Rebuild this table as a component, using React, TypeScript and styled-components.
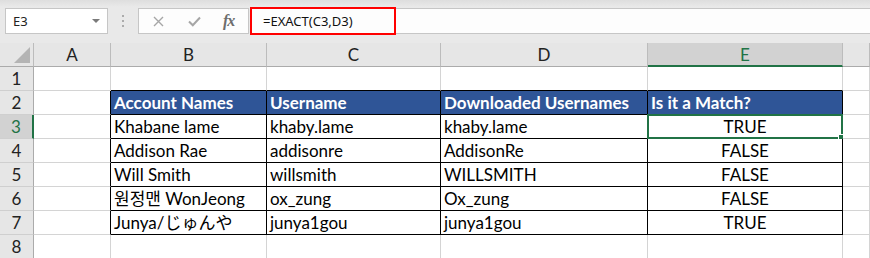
import React from 'react';
import styled, { createGlobalStyle } from 'styled-components';

const GlobalStyle = createGlobalStyle`
  html, body {
    margin: 0;
    padding: 0;
    background: #fff;
  }
  body {
    width: 870px;
    height: 258px;
    overflow: hidden;
    font-family: Lato, "Liberation Sans", sans-serif;
  }
`;

const GREEN = '#217346';
const GRID = '#d4d4d4';
const INK = '#000';

const Window = styled.div`
  width: 870px;
  height: 258px;
  overflow: hidden;
  display: flex;
  flex-direction: column;
  background: #fff;
`;

/* ---------- formula bar ---------- */

const FormulaBar = styled.div`
  flex: none;
  height: 43px;
  box-sizing: border-box;
  padding: 8px 0 0 5px;
  display: flex;
  align-items: flex-start;
  background: linear-gradient(#dedede, #e9e9e9 7px, #e9e9e9);
`;

const NameBox = styled.div`
  width: 103px;
  height: 26px;
  box-sizing: border-box;
  border: 1px solid #c6c6c6;
  background: #fff;
  display: flex;
  align-items: center;
  justify-content: space-between;
  padding: 0 7px 0 7px;
  font: 13px "Noto Sans", "Open Sans", sans-serif;
  color: #222;
`;

const Caret = styled.span`
  width: 0;
  height: 0;
  border-left: 4px solid transparent;
  border-right: 4px solid transparent;
  border-top: 4px solid #7a7a7a;
`;

const Grip = styled.div`
  width: 30px;
  height: 26px;
  display: flex;
  flex-direction: column;
  align-items: center;
  justify-content: center;
  gap: 3px;
  span {
    width: 2px;
    height: 2px;
    background: #ababab;
  }
`;

const FxBox = styled.div`
  width: 111px;
  height: 26px;
  box-sizing: border-box;
  border: 1px solid #c6c6c6;
  background: #fdfdfd;
  display: flex;
  align-items: center;
  padding-left: 14px;
  gap: 24px;
`;

const FxLabel = styled.span`
  font: italic 700 16px "Liberation Serif", serif;
  color: #6d6d6d;
  letter-spacing: -1px;
  margin-left: -2px;
`;

const FormulaInput = styled.div`
  flex: 1;
  height: 26px;
  box-sizing: border-box;
  margin-left: 2px;
  border-top: 1px solid #c6c6c6;
  border-bottom: 1px solid #c6c6c6;
  background: #fdfdfd;
  display: flex;
  align-items: center;
`;

const Highlight = styled.div`
  width: 146px;
  height: 28px;
  margin: -1px 0 0 -1px;
  box-sizing: border-box;
  border: 2px solid #ff0000;
  display: flex;
  align-items: center;
  padding-left: 11px;
  font: 13px "Noto Sans", "Open Sans", sans-serif;
  color: #111;
`;

/* ---------- sheet ---------- */

const Sheet = styled.div`
  display: grid;
  grid-template-columns: 34px 77px 156px 174px 207px 195px 1fr;
  grid-auto-rows: 24px;
`;

const Corner = styled.div`
  box-sizing: border-box;
  background: #e6e6e6;
  border-right: 1px solid #bcbcbc;
  border-bottom: 1px solid #ababab;
  display: flex;
  align-items: flex-end;
  justify-content: flex-end;
  padding: 0 3px 3px 0;
  &::after {
    content: '';
    width: 16px;
    height: 16px;
    background: #b4b4b4;
    clip-path: polygon(100% 0, 100% 100%, 0 100%);
  }
`;

const ColHead = styled.div<{ $active?: boolean }>`
  box-sizing: border-box;
  background: ${({ $active }) => ($active ? '#d2d2d2' : '#e6e6e6')};
  border-right: 1px solid #bcbcbc;
  border-bottom: ${({ $active }) => ($active ? `2px solid ${GREEN}` : '1px solid #ababab')};
  display: flex;
  align-items: center;
  justify-content: center;
  font: 17px Lato, sans-serif;
  color: ${({ $active }) => ($active ? GREEN : '#222')};
`;

const RowHead = styled.div<{ $active?: boolean }>`
  box-sizing: border-box;
  background: ${({ $active }) => ($active ? '#d2d2d2' : '#e6e6e6')};
  border-right: ${({ $active }) => ($active ? `2px solid ${GREEN}` : '1px solid #ababab')};
  border-bottom: 1px solid #cfcfcf;
  display: flex;
  align-items: center;
  justify-content: center;
  font: 17px Lato, sans-serif;
  color: ${({ $active }) => ($active ? GREEN : '#222')};
`;

const Cell = styled.div<{
  $right: string;
  $bottom: string;
  $fill?: string;
  $center?: boolean;
  $bold?: boolean;
}>`
  position: relative;
  box-sizing: border-box;
  border-right: 1px solid ${({ $right }) => $right};
  border-bottom: 1px solid ${({ $bottom }) => $bottom};
  background: ${({ $fill }) => $fill ?? '#fff'};
  padding: 0 3px;
  font: ${({ $bold }) => ($bold ? 700 : 400)} 17px/23px Lato, "Noto Sans CJK KR", "Noto Sans CJK JP", sans-serif;
  color: ${({ $fill }) => ($fill ? '#fff' : INK)};
  text-align: ${({ $center }) => ($center ? 'center' : 'left')};
  white-space: nowrap;
`;

const Selection = styled.div`
  position: absolute;
  inset: -1px -1px -1px -1px;
  border: 2px solid ${GREEN};
  pointer-events: none;
  &::after {
    content: '';
    position: absolute;
    right: -4px;
    bottom: -4px;
    width: 5px;
    height: 5px;
    background: ${GREEN};
    border: 1px solid #fff;
  }
`;

const COLS = ['A', 'B', 'C', 'D', 'E', ''];
const ROWS = 8;

const table: string[][] = [
  ['Account Names', 'Username', 'Downloaded Usernames', 'Is it a Match?'],
  ['Khabane lame', 'khaby.lame', 'khaby.lame', 'TRUE'],
  ['Addison Rae', 'addisonre', 'AddisonRe', 'FALSE'],
  ['Will Smith', 'willsmith', 'WILLSMITH', 'FALSE'],
  ['원정맨 WonJeong', 'ox_zung', 'Ox_zung', 'FALSE'],
  ['Junya/じゅんや', 'junya1gou', 'junya1gou', 'TRUE'],
];

// table sits in B2:E7 (1-based row, 0-based column index into COLS)
const inTable = (r: number, c: number) => r >= 2 && r <= 7 && c >= 1 && c <= 4;

const CrossIcon = () => (
  <svg width="11" height="11" viewBox="0 0 11 11">
    <path d="M1 1 L10 10 M10 1 L1 10" stroke="#a6a6a6" strokeWidth="1.4" fill="none" />
  </svg>
);

const CheckIcon = () => (
  <svg width="13" height="11" viewBox="0 0 13 11">
    <path d="M1 5.5 L4.8 9.3 L12 1.5" stroke="#a6a6a6" strokeWidth="2" fill="none" />
  </svg>
);

const App: React.FC = () => {
  const cells: React.ReactNode[] = [];

  cells.push(<Corner key="corner" />);
  COLS.forEach((col, c) => {
    cells.push(
      <ColHead key={`h${c}`} $active={col === 'E'}>
        {col}
      </ColHead>,
    );
  });

  for (let r = 1; r <= ROWS; r++) {
    cells.push(
      <RowHead key={`r${r}`} $active={r === 3}>
        {r}
      </RowHead>,
    );
    COLS.forEach((_, c) => {
      const boxed = inTable(r, c);
      const right = boxed || inTable(r, c + 1) ? INK : GRID;
      const bottom = boxed || inTable(r + 1, c) ? INK : GRID;
      const text = boxed ? table[r - 2][c - 1] : '';
      const isHeader = r === 2 && boxed;
      cells.push(
        <Cell
          key={`${r}-${c}`}
          $right={right}
          $bottom={bottom}
          $fill={isHeader ? '#2f5597' : undefined}
          $bold={isHeader}
          $center={boxed && c === 4 && !isHeader}
        >
          {text}
          {r === 3 && c === 4 && <Selection />}
        </Cell>,
      );
    });
  }

  return (
    <>
      <GlobalStyle />
      <Window>
        <FormulaBar>
          <NameBox>
            E3
            <Caret />
          </NameBox>
          <Grip>
            <span />
            <span />
            <span />
          </Grip>
          <FxBox>
            <CrossIcon />
            <CheckIcon />
            <FxLabel>fx</FxLabel>
          </FxBox>
          <FormulaInput>
            <Highlight>=EXACT(C3,D3)</Highlight>
          </FormulaInput>
        </FormulaBar>
        <Sheet>{cells}</Sheet>
      </Window>
    </>
  );
};

export default App;
